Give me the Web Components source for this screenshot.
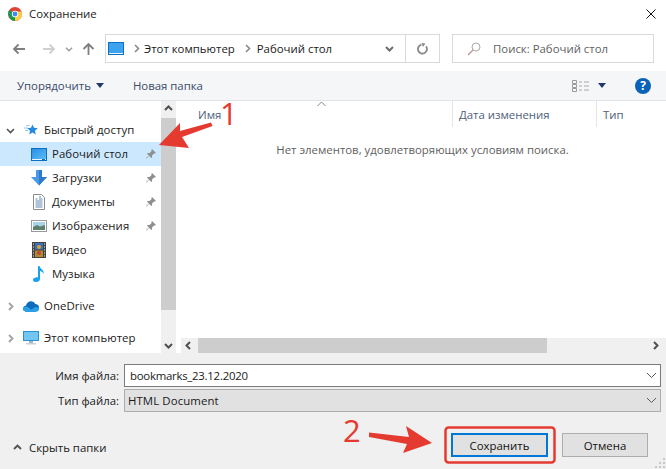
<!DOCTYPE html>
<html lang="ru"><head><meta charset="utf-8"><title>Сохранение</title>
<style>
html,body{margin:0;padding:0;background:#fff}
body{font:11.4px "Open Sans","Noto Sans",sans-serif;color:#1a1a1a;width:666px;height:469px;overflow:hidden}
</style></head><body>
<x-dialog></x-dialog>
<script>
const ICONS={
desk:'<svg width="16" height="13" viewBox="0 0 16 13"><defs><linearGradient id="dg" x1="0" y1="0" x2="1" y2="1"><stop offset="0" stop-color="#2a8fe6"/><stop offset="1" stop-color="#58bdf5"/></linearGradient></defs><rect width="16" height="13" fill="#0c6fc4"/><rect x="1" y="1" width="14" height="10" fill="url(#dg)"/><rect x="1" y="11" width="14" height="1" fill="#e9f5fd"/><rect x="11" y="11" width="3" height="1" fill="#0c6fc4"/></svg>',
star:'<svg width="16" height="14" viewBox="0 0 16 14"><path d="M9.500 1.500l1.500 3.300 3.800.4-2.900 2.500.9 3.800-3.300-2-3.300 2 .9-3.800-2.900-2.500 3.800-.4z" fill="#2489e0"/><path d="M1 5h4M2 7.500h3M3 2.500h3.500" stroke="#8cc8f2" stroke-width="1"/></svg>',
down:'<svg width="16" height="16" viewBox="0 0 16 16"><path d="M5 0h6v7h5l-8 8.500L0 7h5z" fill="#4a9ae6"/><path d="M8 0h3v7h5l-8 8.500z" fill="#2e7bc9"/></svg>',
doc:'<svg width="12" height="16" viewBox="0 0 12 16"><path d="M.5.500h8l3 3v12H.5z" fill="#fff" stroke="#8a8a8a"/><path d="M2.500 5h2M6 3h2M6 5h3.500M2.500 7h7M2.500 9h7M2.500 11h7M2.500 13h7" stroke="#5f86b3"/></svg>',
img:'<svg width="16" height="12" viewBox="0 0 16 12"><rect x=".5" y=".5" width="15" height="11" fill="#fff" stroke="#9a9a9a"/><rect x="2" y="2" width="12" height="8" fill="#a9d3e6"/><path d="M2 7l4-2 3 1.500 5-1.500v5H2z" fill="#5c7f6e"/></svg>',
vid:'<svg width="14" height="16" viewBox="0 0 14 16"><rect width="14" height="16" fill="#444"/><rect x="3" y="1" width="8" height="6.500" fill="#3f6fb5"/><rect x="3" y="8.500" width="8" height="6.500" fill="#b08a2e"/><path d="M1 2h1M1 5h1M1 8h1M1 11h1M1 14h1M12 2h1M12 5h1M12 8h1M12 11h1M12 14h1" stroke="#eee"/><circle cx="7" cy="5" r="2" fill="#d9a72c"/><circle cx="7" cy="11" r="2" fill="#c2453c"/></svg>',
mus:'<svg width="12" height="16" viewBox="0 0 12 16"><path d="M5 0h1.500c.3 3 5 3.500 4 8-.5-2-2.500-3-3.500-3v8c0 2-2 3-4 3-2 0-3-1-3-2 0-2 3-3 5-2.500z" fill="#17a0f0"/></svg>',
cloud:'<svg width="17" height="11" viewBox="0 0 17 11"><path d="M3.500 11C1.500 11 0 9.800 0 8c0-1.700 1.200-3 3-3.200C3.800 2 6 0 8.500 0c2 0 3.700 1 4.500 2.800 2.300 0 4 1.500 4 3.700S15.500 11 13 11z" fill="#0f6cbd"/><path d="M3.500 11C1.500 11 0 9.800 0 8c0-1 1-2.500 3-2.500 1 0 2 .5 6 3.500 1.500-1.500 3-3 5-3 2 0 3 1 3 2.500 0 1.500-1.500 2.500-4 2.500z" fill="#2aa0e8"/></svg>',
pc:'<svg width="16" height="14" viewBox="0 0 16 14"><rect width="16" height="10" fill="#2d8fd6"/><rect x="1" y="1" width="14" height="8" fill="#74c6f2"/><rect x="6" y="10" width="4" height="2" fill="#9fb4c2"/><rect x="3" y="12" width="10" height="1.500" fill="#c7d2da"/></svg>',
pin:'<svg width="10" height="10" viewBox="0 0 10 10"><path d="M6 0l4 4-1 .6-1-.2-2 2 .1 2L5.300 9 3 6.700 .6 9.500 0 9l2.900-2.500L1 4.700l.6-.8 2 .1 2-2-.2-1z" fill="#8f8f8f"/></svg>'
};
function def(name,css,html){
  customElements.define(name,class extends HTMLElement{
    constructor(){super();this.attachShadow({mode:'open'})}
    connectedCallback(){
      if(!this._i){this._i=1;this.shadowRoot.innerHTML='<style>'+css+'</style>'+(typeof html==='function'?html(this):html)}
    }
  });
}
const chev=(d,c='#6d6d6d',w=1.6)=>`<svg width="9" height="9" viewBox="0 0 9 9"><path d="${d}" fill="none" stroke="${c}" stroke-width="${w}"/></svg>`;
const CD='M1 3l3.500 3.500L8 3',CR='M3 1l3.500 3.500L3 8',CU='M1 6l3.500-3.500L8 6',CL='M6 1L2.500 4.500 6 8';

def('x-titlebar',':host{display:flex;align-items:center;height:28px;padding-left:8px;gap:7px;font-size:11.4px;color:#1a1a1a}.sp{flex:1}svg{display:block}.x{margin-right:10px}.t{padding-bottom:2px}',
`<svg width="14" height="14" viewBox="0 0 14 14"><circle cx="7" cy="7" r="7" fill="#db4437"/><path d="M7 7L1.500 10.500A7 7 0 0 0 7 14z" fill="#0f9d58"/><path d="M7 14A7 7 0 0 0 13.500 4.500H7z" fill="#ffcd40"/><path d="M7 7L1.500 10.500A7 7 0 0 1 1.200 3z" fill="#0f9d58"/><circle cx="7" cy="7" r="3.200" fill="#fff"/><circle cx="7" cy="7" r="2.400" fill="#4285f4"/></svg><span class="t">Сохранение</span><span class="sp"></span><svg class="x" width="10" height="10" viewBox="0 0 10 10"><path d="M.5.500l9 9M9.500.500l-9 9" stroke="#111" stroke-width="1"/></svg>`);

def('x-nav',`:host{display:flex;align-items:center;height:29px;margin:6px 0 8px;padding:0 12px 0 12px;font-size:11.4px}
svg{display:block;flex:none}.b{display:flex;align-items:center;border:1px solid #d9d9d9;height:27px;box-sizing:content-box}
.arrows{display:flex;align-items:center;width:93px}
.addr{padding-left:2px;box-sizing:border-box;width:335px;height:29px}.addr .c{flex:none;margin:0 3px 0 8px}.addr .c2{margin-right:5px}.addr span{white-space:nowrap}
.sp{flex:1}.sep{width:1px;height:27px;background:#d9d9d9}.dd{width:32px;display:flex;justify-content:center}.ref{width:33px;display:flex;justify-content:center}
.search{width:186px;margin-left:12px;color:#5f5f5f;padding-left:14px;gap:12px}`,
`<div class="arrows">
<svg width="14" height="12" viewBox="0 0 14 12"><path d="M13 6H2M6.500 1.500L2 6l4.500 4.500" fill="none" stroke="#7f7f7f" stroke-width="1.800"/></svg>
<svg style="margin-left:16px" width="14" height="12" viewBox="0 0 14 12"><path d="M1 6h11M7.500 1.500L12 6l-4.500 4.500" fill="none" stroke="#cfcfcf" stroke-width="1.800"/></svg>
<svg style="margin-left:9px" width="8" height="8" viewBox="0 0 9 9"><path d="${CD}" fill="none" stroke="#9a9a9a" stroke-width="1.500"/></svg>
<svg style="margin-left:9px" width="13" height="14" viewBox="0 0 13 14"><path d="M6.500 13V2M1.500 7l5-5 5 5" fill="none" stroke="#7f7f7f" stroke-width="1.800"/></svg>
</div>
<div class="b addr"><svg width="16" height="13" viewBox="0 0 16 13"><rect width="16" height="13" fill="#0c6fc4"/><rect x="1" y="1" width="14" height="10" fill="#3da3ee"/><rect x="1" y="11" width="14" height="1" fill="#e9f5fd"/></svg>
<span class="c">${chev(CR,'#8a8a8a')}</span><span>Этот компьютер</span><span class="c c2">${chev(CR,'#8a8a8a')}</span><span>Рабочий стол</span>
<span class="sp"></span><span class="dd">${chev(CD,'#6d6d6d',2)}</span><span class="sep"></span><span class="ref"><svg width="12" height="12" viewBox="0 0 12 12"><path d="M3 2.500a4.500 4.500 0 1 0 5 0" transform="rotate(20 6 6)" fill="none" stroke="#8a8a8a" stroke-width="1.800"/><path d="M4.500 0l4 .5-2.500 3.500z" fill="#8a8a8a"/></svg></span></div>
<div class="b search"><svg width="14" height="14" viewBox="0 0 14 14"><circle cx="9" cy="5" r="4" fill="none" stroke="#a9a9a9"/><path d="M6 8l-5 5" stroke="#c08f8f" stroke-width="1.200"/></svg><span>Поиск: Рабочий стол</span></div>`);

def('x-toolbar',`:host{display:flex;align-items:center;height:29px;background:#f5f6f7;border-bottom:1px solid #e3e3e3;padding-left:17px;font-size:11.4px;color:#3b4a6b}
svg{display:block;flex:none}.sp{flex:1}.a{display:flex;align-items:center;gap:5px}.n{margin-left:29px}`,
`<span class="a">Упорядочить<svg width="8" height="5" viewBox="0 0 8 5"><path d="M0 0h8L4 5z" fill="#1f3a6b"/></svg></span><span class="n">Новая папка</span><span class="sp"></span>
<svg width="17" height="12" viewBox="0 0 17 12"><path d="M.5.500h4v3h-4zM.5 4.500h4v3h-4zM.5 8.500h4v3h-4z" fill="none" stroke="#9a9a9a"/><path d="M7 2h3M12 2h5M7 6h3M12 6h5M7 10h3M12 10h5" stroke="#a8a8a8"/></svg>
<svg style="margin:0 29px 0 9px" width="8" height="5" viewBox="0 0 8 5"><path d="M0 0h8L4 5z" fill="#1f3a6b"/></svg>
<svg style="margin-right:15px" width="16" height="16" viewBox="0 0 16 16"><circle cx="8" cy="8" r="8" fill="#0a63b8"/><text x="8" y="12" text-anchor="middle" font-family="Open Sans" font-weight="700" font-size="12" fill="#fff">?</text></svg>`);

def('x-tree-item',`:host{display:flex;align-items:center;height:24px;font-size:11.4px;color:#1a1a1a;white-space:nowrap}
:host([sel]){background:#cce8ff}.ic{width:16px;display:flex;justify-content:center;flex:none;margin-right:5px}.ic svg{display:block}
.tw{width:9px;flex:none;display:flex;margin:0 8px 0 6px}.tw svg{display:block}
:host([child]) .tw{margin-left:16px;margin-right:6px;visibility:hidden}
.l{padding-bottom:2px;letter-spacing:.06px}.sp{flex:1}.pin{margin-right:5px;display:flex}`,
h=>{const ic=h.getAttribute('icon');const t=h.getAttribute('tw');return `<span class="tw">${t?chev(t==='d'?CD:CR,t==='d'?'#555':'#a6a6a6',t==='d'?1.6:2):''}</span><span class="ic">${ICONS[ic]}</span><span class="l"><slot></slot></span><span class="sp"></span>${h.hasAttribute('pin')?`<span class="pin">${ICONS.pin}</span>`:''}`});

def('x-scroll-btn',`:host{display:flex;align-items:center;justify-content:center;flex:none;width:15px;height:15px}svg{display:block}`,
h=>chev({u:CU,d:CD,l:CL,r:CR}[h.getAttribute('dir')],'#505050',2));

def('x-nav-pane',`:host{display:flex;width:176px;flex:none}
.tree{width:161px;flex:none;padding-top:17px;box-sizing:border-box;overflow:hidden}
.sb{width:15px;flex:none;background:#f0f0f0;display:flex;flex-direction:column}
.th{height:192px;background:#cdcdcd;margin-top:2px}.sp{flex:1}`,
`<div class="tree"><slot></slot></div><div class="sb"><x-scroll-btn dir="u"></x-scroll-btn><div class="th"></div><div class="sp"></div><x-scroll-btn dir="d"></x-scroll-btn></div>`);

def('x-list',`:host{display:flex;flex-direction:column;flex:1;margin-left:4px;position:relative;font-size:11.4px;min-width:0}
.head{display:flex;height:26px;color:#4c607a;position:relative}
.head>div{display:flex;align-items:center;box-sizing:border-box;padding-left:6px;border-left:1px solid #e5e5e5;height:26px;padding-top:1px}
.head .n{width:272px;border-left:0;padding-left:18px}.head .d{width:144px}.head .t{flex:1}
.caret{position:absolute;left:137px;top:0}
.body{flex:1;text-align:center;color:#5f5f5f;padding-top:15px;padding-right:1px;line-height:16px}
.hs{display:flex;height:15px;background:#f0f0f0;margin-left:1px}
.th{width:349px;background:#cdcdcd;margin-left:2px}.sp{flex:1}`,
`<div class="head"><div class="n">Имя</div><div class="d">Дата изменения</div><div class="t">Тип</div><svg class="caret" width="9" height="6" viewBox="0 0 9 6"><path d="M.5 5L4.500 1l4 4" fill="none" stroke="#888"/></svg></div>
<div class="body">Нет элементов, удовлетворяющих условиям поиска.</div>
<div class="hs"><x-scroll-btn dir="l"></x-scroll-btn><div class="th"></div><div class="sp"></div><x-scroll-btn dir="r" style="margin-right:3px"></x-scroll-btn></div>`);

def('x-field',`:host{display:flex;align-items:center;height:23px;font-size:11.4px}
label{width:119px;text-align:right;color:#1a1a1a;margin-right:5px;flex:none}
.box{flex:1;height:23px;box-sizing:border-box;display:flex;align-items:center;border:1px solid #7a7a7a;background:#fff;padding-left:5px;color:#1a1a1a;min-width:0}
:host([ro]) .box{background:#e1e1e1;border-color:#adadad;padding-left:3px;letter-spacing:.1px}
:host(:not([ro])) .box{letter-spacing:-.25px}
.sp{flex:1}svg{display:block;margin-right:3px}`,
h=>`<label>${h.getAttribute('label')}</label><div class="box"><slot></slot><span class="sp"></span><svg width="11" height="7" viewBox="0 0 11 7"><path d="M1 1l4.500 4.500L10 1" fill="none" stroke="#5a5a5a"/></svg></div>`);

def('x-btn',`:host{display:flex;align-items:center;justify-content:center;box-sizing:border-box;height:24px;border:1px solid #adadad;background:#e1e1e1;font-size:11.4px;color:#111}
:host([primary]){border:2px solid #0078d7}`,`<slot></slot>`);

def('x-footer',`:host{display:block;background:#f0f0f0;height:116px;box-sizing:border-box;padding:11px 5px 0 0;position:relative}
.fields{display:flex;flex-direction:column;gap:2px}
.row{display:flex;align-items:center;margin-top:21px;padding-left:13px}
.hide{display:flex;align-items:center;gap:7px;font-size:11.4px;color:#1a1a1a;margin-top:4px}
.hide svg{display:block}
.sp{flex:1}.btns{display:flex;gap:14px;padding-right:13px}
x-btn.s{width:97px}x-btn.c{width:86px}
.grip{position:absolute;right:1px;bottom:1px}`,
`<div class="fields"><x-field label="Имя файла:">bookmarks_23.12.2020</x-field><x-field label="Тип файла:" ro>HTML Document</x-field></div>
<div class="row"><div class="hide">${chev(CU,'#505050',1.8)}<span>Скрыть папки</span></div><span class="sp"></span><div class="btns"><x-btn class="s" primary>Сохранить</x-btn><x-btn class="c">Отмена</x-btn></div></div>
<svg class="grip" width="11" height="11" viewBox="0 0 11 11"><path d="M9 1h2v2H9zM5 5h2v2H5zM9 5h2v2H9zM1 9h2v2H1zM5 9h2v2H5zM9 9h2v2H9z" fill="#c8c8c8"/></svg>`);

def('x-notes',`:host{display:block;position:absolute;inset:0;pointer-events:none}
.t{position:absolute;color:#e53a30;font:31px/32px "Open Sans",sans-serif}
svg{position:absolute;left:0;top:0}`,
`<svg width="666" height="469" viewBox="0 0 666 469">
<path d="M159 145L180 123l0 8 31-8.500 1.500 3.500-30.500 11 7 11z" fill="#e53a30"/>
<path d="M369 432.500L409 437l-3-11 26 17-29 10 4-9-38-7z" fill="#e53a30"/>
<rect x="445.500" y="427.500" width="109" height="35" rx="3" fill="none" stroke="#e53a30" stroke-width="2.500"/>
</svg><span class="t" style="left:220px;top:97px">1</span><span class="t" style="left:343px;top:414px">2</span>`);

def('x-dialog',`:host{display:flex;flex-direction:column;width:666px;height:469px;position:relative;overflow:hidden}
.main{display:flex;height:252px}`,
`<x-titlebar></x-titlebar><x-nav></x-nav><x-toolbar></x-toolbar>
<div class="main"><x-nav-pane>
<x-tree-item tw="d" icon="star">Быстрый доступ</x-tree-item>
<x-tree-item child icon="desk" pin sel>Рабочий стол</x-tree-item>
<x-tree-item child icon="down" pin>Загрузки</x-tree-item>
<x-tree-item child icon="doc" pin>Документы</x-tree-item>
<x-tree-item child icon="img" pin>Изображения</x-tree-item>
<x-tree-item child icon="vid">Видео</x-tree-item>
<x-tree-item child icon="mus">Музыка</x-tree-item>
<x-tree-item tw="r" icon="cloud" style="margin-top:8px">OneDrive</x-tree-item>
<x-tree-item tw="r" icon="pc" style="margin-top:8px">Этот компьютер</x-tree-item>
</x-nav-pane><x-list></x-list></div>
<x-footer></x-footer><x-notes></x-notes>`);
</script>
</body></html>
